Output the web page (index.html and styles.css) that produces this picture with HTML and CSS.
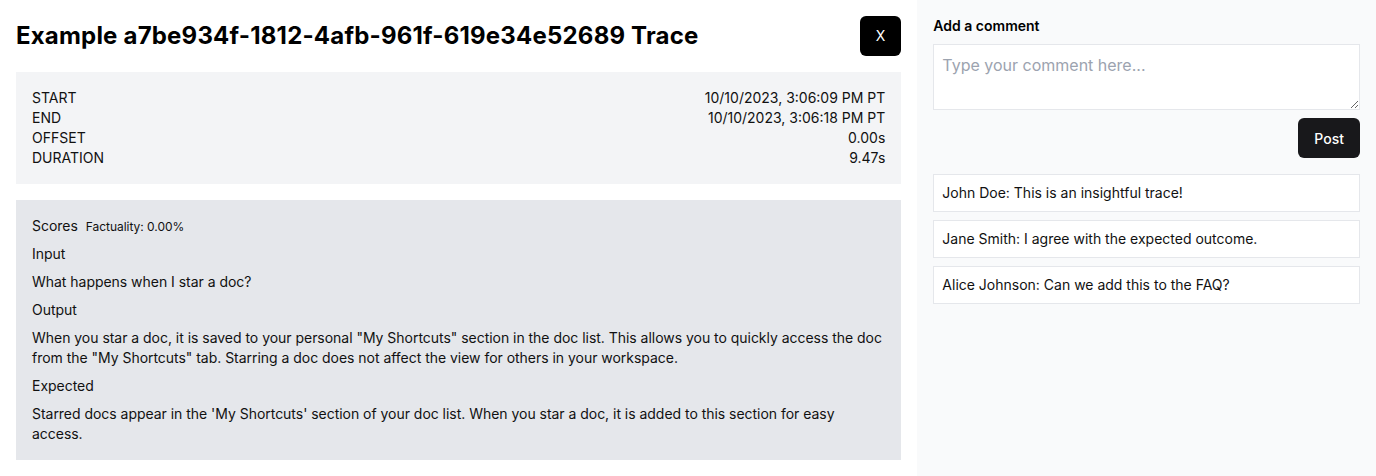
FILE: index.html
```html
<!DOCTYPE html>
<html lang="en">
<head>
<meta charset="utf-8">
<title>Trace</title>
<link rel="stylesheet" href="styles.css">
</head>
<body>
<div class="layout">
  <main class="main">
    <header class="header">
      <h1 class="title">Example a7be934f-1812-4afb-961f-619e34e52689 Trace</h1>
      <button class="close-btn">X</button>
    </header>
    <section class="meta">
      <div class="meta-row"><span>START</span><span>10/10/2023, 3:06:09 PM PT</span></div>
      <div class="meta-row"><span>END</span><span>10/10/2023, 3:06:18 PM PT</span></div>
      <div class="meta-row"><span>OFFSET</span><span>0.00s</span></div>
      <div class="meta-row"><span>DURATION</span><span>9.47s</span></div>
    </section>
    <section class="details">
      <div class="scores">Scores <span class="score-item">Factuality: 0.00%</span></div>
      <div>Input</div>
      <div>What happens when I star a doc?</div>
      <div>Output</div>
      <div>When you star a doc, it is saved to your personal "My Shortcuts" section in the doc list. This allows you to quickly access the doc from the "My Shortcuts" tab. Starring a doc does not affect the view for others in your workspace.</div>
      <div>Expected</div>
      <div>Starred docs appear in the 'My Shortcuts' section of your doc list. When you star a doc, it is added to this section for easy access.</div>
    </section>
  </main>
  <aside class="sidebar">
    <h2 class="side-title">Add a comment</h2>
    <textarea class="comment-input" rows="2" placeholder="Type your comment here..."></textarea>
    <div class="actions"><button class="post-btn">Post</button></div>
    <ul class="comments">
      <li class="comment">John Doe: This is an insightful trace!</li>
      <li class="comment">Jane Smith: I agree with the expected outcome.</li>
      <li class="comment">Alice Johnson: Can we add this to the FAQ?</li>
    </ul>
  </aside>
</div>
</body>
</html>
```

FILE: styles.css
```css
* { box-sizing: border-box; }
html, body { margin: 0; padding: 0; }
body {
  font-family: Inter, "Noto Sans", sans-serif;
  font-size: 14px;
  line-height: 20px;
  color: #111;
  background: #fff;
}
.layout {
  display: flex;
  height: 476px;
}
.main {
  width: 66.6667%;
  padding: 16px;
}
.sidebar {
  width: 33.3333%;
  padding: 16px;
  background: #f9fafb;
}
.header {
  display: flex;
  align-items: center;
  justify-content: space-between;
  margin-bottom: 16px;
}
.title {
  margin: 0;
  font-size: 24px;
  line-height: 32px;
  font-weight: 700;
  letter-spacing: 0.2px;
  color: #000;
}
.close-btn {
  height: 40px;
  padding: 0 16px;
  border: 0;
  border-radius: 6px;
  background: #000;
  color: #fff;
  font-family: inherit;
  font-size: 14px;
  line-height: 20px;
}
.meta {
  background: #f3f4f6;
  padding: 16px;
  margin-bottom: 16px;
}
.meta-row {
  display: flex;
  justify-content: space-between;
}
.details {
  background: #e5e7eb;
  padding: 16px;
  display: flex;
  flex-direction: column;
  gap: 8px;
  letter-spacing: -0.03px;
}
.scores {
  height: 20px;
}
.score-item {
  font-size: 12px;
  line-height: 1;
  margin-left: 4px;
}
.side-title {
  margin: 0 0 8px;
  font-size: 14px;
  line-height: 20px;
  font-weight: 600;
  color: #000;
}
.comment-input {
  display: block;
  width: 100%;
  padding: 8px;
  border: 1px solid #e5e7eb;
  background: #fff;
  font-family: inherit;
  font-size: 16px;
  line-height: 24px;
  resize: vertical;
  border-radius: 0;
}
.comment-input::placeholder { color: #9ca3af; }
.actions {
  display: flex;
  justify-content: flex-end;
  margin-top: 8px;
}
.post-btn {
  height: 40px;
  padding: 0 16px;
  border: 0;
  border-radius: 6px;
  background: #18181b;
  color: #fff;
  font-family: inherit;
  font-size: 14px;
  font-weight: 500;
}
.comments {
  list-style: none;
  margin: 16px 0 0;
  padding: 0;
  display: flex;
  flex-direction: column;
  gap: 8px;
}
.comment {
  background: #fff;
  border: 1px solid #e5e7eb;
  padding: 8px;
}
```
